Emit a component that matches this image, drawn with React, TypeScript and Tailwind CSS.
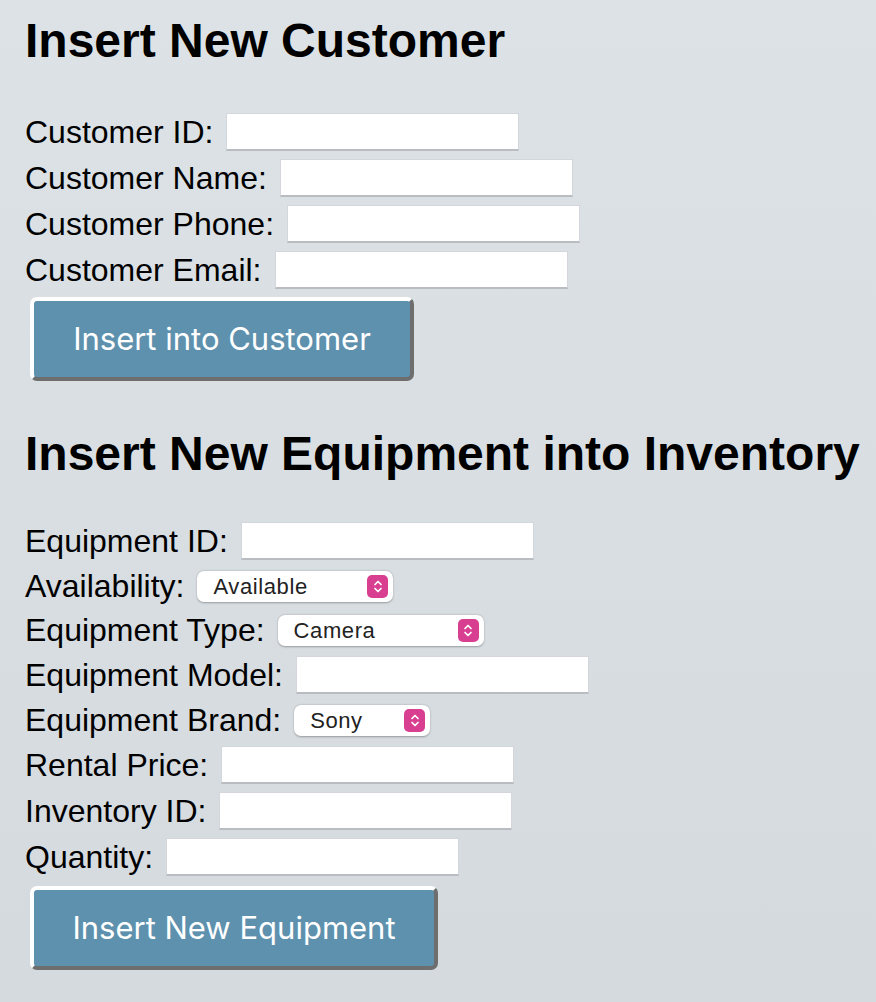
import React from "react";

type Field =
  | { kind: "input"; label: string }
  | { kind: "select"; label: string; value: string; width: string };

const customerFields: Field[] = [
  { kind: "input", label: "Customer ID:" },
  { kind: "input", label: "Customer Name:" },
  { kind: "input", label: "Customer Phone:" },
  { kind: "input", label: "Customer Email:" },
];

const equipmentFields: Field[] = [
  { kind: "input", label: "Equipment ID:" },
  { kind: "select", label: "Availability:", value: "Available", width: "w-[196px]" },
  { kind: "select", label: "Equipment Type:", value: "Camera", width: "w-[206px]" },
  { kind: "input", label: "Equipment Model:" },
  { kind: "select", label: "Equipment Brand:", value: "Sony", width: "w-[136px]" },
  { kind: "input", label: "Rental Price:" },
  { kind: "input", label: "Inventory ID:" },
  { kind: "input", label: "Quantity:" },
];

function Stepper() {
  return (
    <span className="flex h-[23px] w-[21px] items-center justify-center rounded-[5px] bg-[#d93f91]">
      <svg width="10" height="15" viewBox="0 0 10 15" fill="none">
        <path d="M2 5.5l3-3 3 3M2 9.5l3 3 3-3" stroke="white" strokeWidth="1.7" strokeLinecap="round" strokeLinejoin="round" />
      </svg>
    </span>
  );
}

function Row({ field }: { field: Field }) {
  if (field.kind === "input") {
    return (
      <div className="flex h-[46px] items-center gap-[13px]">
        <label className="text-[32px] leading-none text-black">{field.label}</label>
        <input
          type="text"
          className="h-[38px] w-[293px] border border-[#d3d7db] border-b-2 border-b-[#b9bdc1] bg-white outline-none"
        />
      </div>
    );
  }
  return (
    <div className="flex h-[44px] items-center gap-[13px]">
      <label className="text-[32px] leading-none text-black">{field.label}</label>
      <div
        className={`${field.width} flex h-[31px] items-center justify-between rounded-[7px] bg-white pl-[16px] pr-[5px] shadow-[0_0.5px_2px_rgba(0,0,0,0.3)]`}
      >
        <span className="text-[22px] tracking-[0.6px] text-[#222]">{field.value}</span>
        <Stepper />
      </div>
    </div>
  );
}

function SubmitButton({ text, width }: { text: string; width: string }) {
  return (
    <button
      className={`${width} ml-[5px] h-[84px] rounded-[7px] border-4 border-t-white border-l-white border-r-[#6e6e6e] border-b-[#6e6e6e] bg-[#5e91ae] text-[31px] text-white`}
      style={{ fontFamily: "Inter, 'Liberation Sans', sans-serif" }}
    >
      {text}
    </button>
  );
}

export default function App() {
  return (
    <div
      className="min-h-screen w-full bg-gradient-to-b from-[#dce2e6] to-[#d5dadf] pl-[25px] pt-[13px]"
      style={{ fontFamily: "'Liberation Sans', Arial, sans-serif" }}
    >
      <h1 className="text-[48px] font-bold leading-[56px] text-black">Insert New Customer</h1>
      <div className="mt-[40px] flex flex-col">
        {customerFields.map((f) => (
          <Row key={f.label} field={f} />
        ))}
      </div>
      <div className="mt-[4px]">
        <SubmitButton text="Insert into Customer" width="w-[384px]" />
      </div>

      <h1 className="mt-[45px] text-[48px] font-bold leading-[56px] text-black">
        Insert New Equipment into Inventory
      </h1>
      <div className="mt-[36px] flex flex-col">
        {equipmentFields.map((f) => (
          <Row key={f.label} field={f} />
        ))}
      </div>
      <div className="mt-[6px] pb-[30px]">
        <SubmitButton text="Insert New Equipment" width="w-[408px]" />
      </div>
    </div>
  );
}
